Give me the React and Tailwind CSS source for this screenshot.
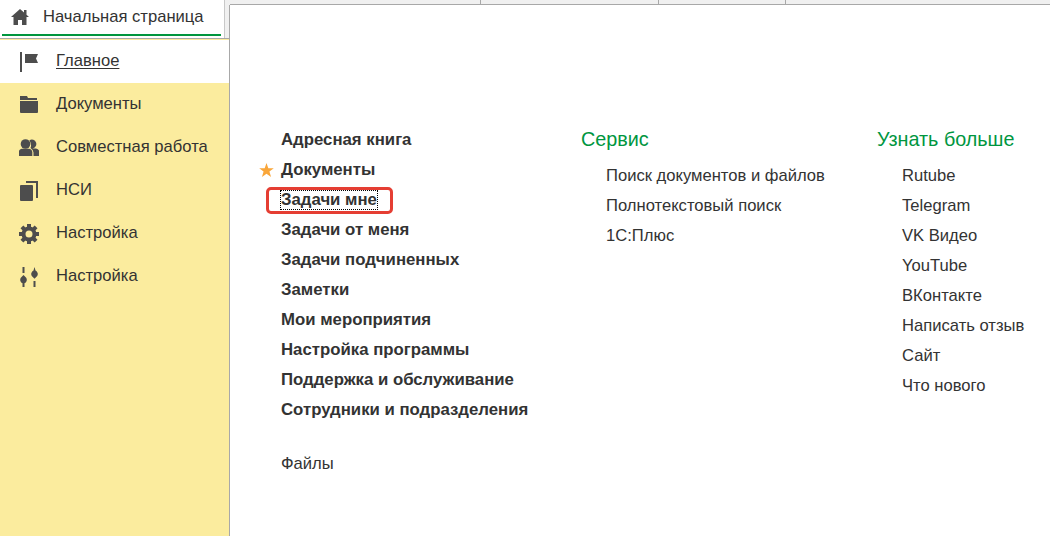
const HomeIcon = () => (
  <svg width="18" height="16" viewBox="0 0 18 16" fill="#4d4d4d">
    <path d="M9 0 0 8h2.500v8H7v-5h4v5h4.500V8H18l-2.500-2.300V1h-2.500v2.400z" />
  </svg>
);
const FlagIcon = () => (
  <svg width="20" height="20" viewBox="0 0 20 20" fill="#4d4d4d">
    <rect x="1" y="0" width="2" height="20" />
    <path d="M6 2h13l-2 4.500 2 4.500H6z" />
  </svg>
);
const FolderIcon = () => (
  <svg width="20" height="20" viewBox="0 0 20 20" fill="#4d4d4d">
    <path d="M1 1h7l1 2h9v2H1z" />
    <path d="M1 6h18v11q0 1-1 1H2q-1 0-1-1z" />
  </svg>
);
const PeopleIcon = () => (
  <svg width="20" height="18" viewBox="0 0 20 18" fill="#4d4d4d">
    <path d="M10.500 1.200a4.500 4.500 0 1 1 3 8.300h3.500q3.500 1 3.500 4V17h-6v-3.500q0-2.500-3-4.500 1.500-3-1-7.800z" />
    <circle cx="6.500" cy="5" r="4.800" />
    <path d="M-.3 17v-3.500q0-3 3-3.800h7.600q3 .8 3 3.800V17z" />
  </svg>
);
const PagesIcon = () => (
  <svg width="20" height="20" viewBox="0 0 20 20" fill="#4d4d4d">
    <path d="M7 0h12v17h-2V2H7z" />
    <rect x="1" y="4" width="13" height="16" rx="1" />
  </svg>
);
const GearIcon = () => (
  <svg width="20" height="20" viewBox="0 0 20 20" fill="none" stroke="#4d4d4d">
    <circle cx="10" cy="10" r="5.500" strokeWidth="4" />
    {[0, 45, 90, 135].map((a) => (
      <path key={a} d="M10 0v4M10 16v4" strokeWidth="4" transform={`rotate(${a} 10 10)`} />
    ))}
  </svg>
);
const SlidersIcon = () => (
  <svg width="20" height="20" viewBox="0 0 20 20" fill="#4d4d4d">
    <rect x="3.500" y="0" width="2" height="6" />
    <path d="M4.500 8 1.800 10.800a3.700 3.700 0 0 0 1.700 5.400V20h2v-3.800a3.700 3.700 0 0 0 1.700-5.400z" />
    <path d="M15.500 0l-1 3.600a3.700 3.700 0 0 0-1.700 5.400l2.700 2.700 2.700-2.700a3.700 3.700 0 0 0-1.700-5.400z" />
    <rect x="14.500" y="14" width="2" height="6" />
  </svg>
);

const navItems = [
  { label: "Главное", icon: <FlagIcon />, active: true },
  { label: "Документы", icon: <FolderIcon /> },
  { label: "Совместная работа", icon: <PeopleIcon /> },
  { label: "НСИ", icon: <PagesIcon /> },
  { label: "Настройка", icon: <GearIcon /> },
  { label: "Настройка", icon: <SlidersIcon /> },
];

const mainLinks = [
  "Адресная книга",
  "Документы",
  "Задачи мне",
  "Задачи от меня",
  "Задачи подчиненных",
  "Заметки",
  "Мои мероприятия",
  "Настройка программы",
  "Поддержка и обслуживание",
  "Сотрудники и подразделения",
];

const serviceLinks = ["Поиск документов и файлов", "Полнотекстовый поиск", "1С:Плюс"];
const moreLinks = ["Rutube", "Telegram", "VK Видео", "YouTube", "ВКонтакте", "Написать отзыв", "Сайт", "Что нового"];

function LinkGroup({ title, links, width }) {
  return (
    <div className={width}>
      <div className="h-[30px] flex items-center text-[19.8px] text-[#00963f]">{title}</div>
      <div className="pt-[6px] pl-[25px]">
        {links.map((l) => (
          <div key={l} className="h-[30px] flex items-center whitespace-nowrap">{l}</div>
        ))}
      </div>
    </div>
  );
}

export default function App() {
  return (
    <div
      className="w-[1050px] h-[536px] flex overflow-hidden bg-white text-[16.6px] text-[#333333]"
      style={{ fontFamily: "'Liberation Sans', Arial, sans-serif" }}
    >
      {/* левая панель */}
      <aside className="w-[230px] flex-shrink-0 flex flex-col">
        <div className="h-[39px] flex-shrink-0 flex bg-[#f0f0f0] border-b border-[#a8a8a8]">
          <div className="w-[224px] bg-white pl-[2px] pr-[3px] flex flex-col">
            <div className="flex-1 flex items-center pl-[9px] gap-[14px]">
              <HomeIcon />
              <span className="whitespace-nowrap">Начальная страница</span>
            </div>
            <div className="h-[2px] mb-[2px] bg-[#00963f]" />
          </div>
          <div className="w-px bg-[#c8c8c8]" />
          <div className="flex-1 pt-[5px]">
            <div className="h-full border-r border-[#a8a8a8]" />
          </div>
        </div>
        <nav className="flex-1 flex flex-col pt-px bg-[#fbec9e] border-r border-[#a8a8a8]">
          {navItems.map((it) => (
            <div
              key={it.label + it.active}
              className={`h-[43px] flex-shrink-0 flex items-center pl-[19px] gap-[17px] ${it.active ? "bg-white" : ""}`}
            >
              {it.icon}
              <span className={it.active ? "underline underline-offset-2" : ""}>{it.label}</span>
            </div>
          ))}
        </nav>
      </aside>

      {/* контент */}
      <main className="flex-1 flex flex-col min-w-0">
        <div className="h-[5px] flex-shrink-0 flex bg-[#f0f0f0] border-b border-[#a8a8a8]">
          <div className="w-[251px] border-r border-[#a8a8a8]" />
          <div className="w-[178px] border-r border-[#a8a8a8]" />
          <div className="w-[127px] border-r border-[#a8a8a8]" />
        </div>
        <div className="flex-1 flex pt-[120px] pl-[51px]">
          <div className="w-[300px]">
            {mainLinks.map((l) => (
              <div key={l} className="h-[30px] flex items-center font-bold text-[16.77px] whitespace-nowrap relative">
                {l === "Документы" && (
                  <svg width="15" height="14" viewBox="0 0 24 23" fill="#f9a63a" className="absolute left-[-22px] top-[8px]">
                    <path d="M12 0l3 8.500h9l-7.200 5.500 2.700 9-7.500-5.500L4.500 23l2.700-9L0 8.500h9z" />
                  </svg>
                )}
                {l === "Задачи мне" ? (
                  <>
                    <span className="outline-1 outline-dotted outline-black leading-[18px]">{l}</span>
                    <span className="absolute left-[-15px] top-[2px] w-[127px] h-[27px] rounded-[5px] border-[3px] border-[#e53e33]" />
                  </>
                ) : (
                  l
                )}
              </div>
            ))}
            <div className="h-[30px] mt-[24px] flex items-center">Файлы</div>
          </div>
          <LinkGroup title="Сервис" links={serviceLinks} width="w-[296px]" />
          <LinkGroup title="Узнать больше" links={moreLinks} width="w-[172px]" />
        </div>
      </main>
    </div>
  );
}
